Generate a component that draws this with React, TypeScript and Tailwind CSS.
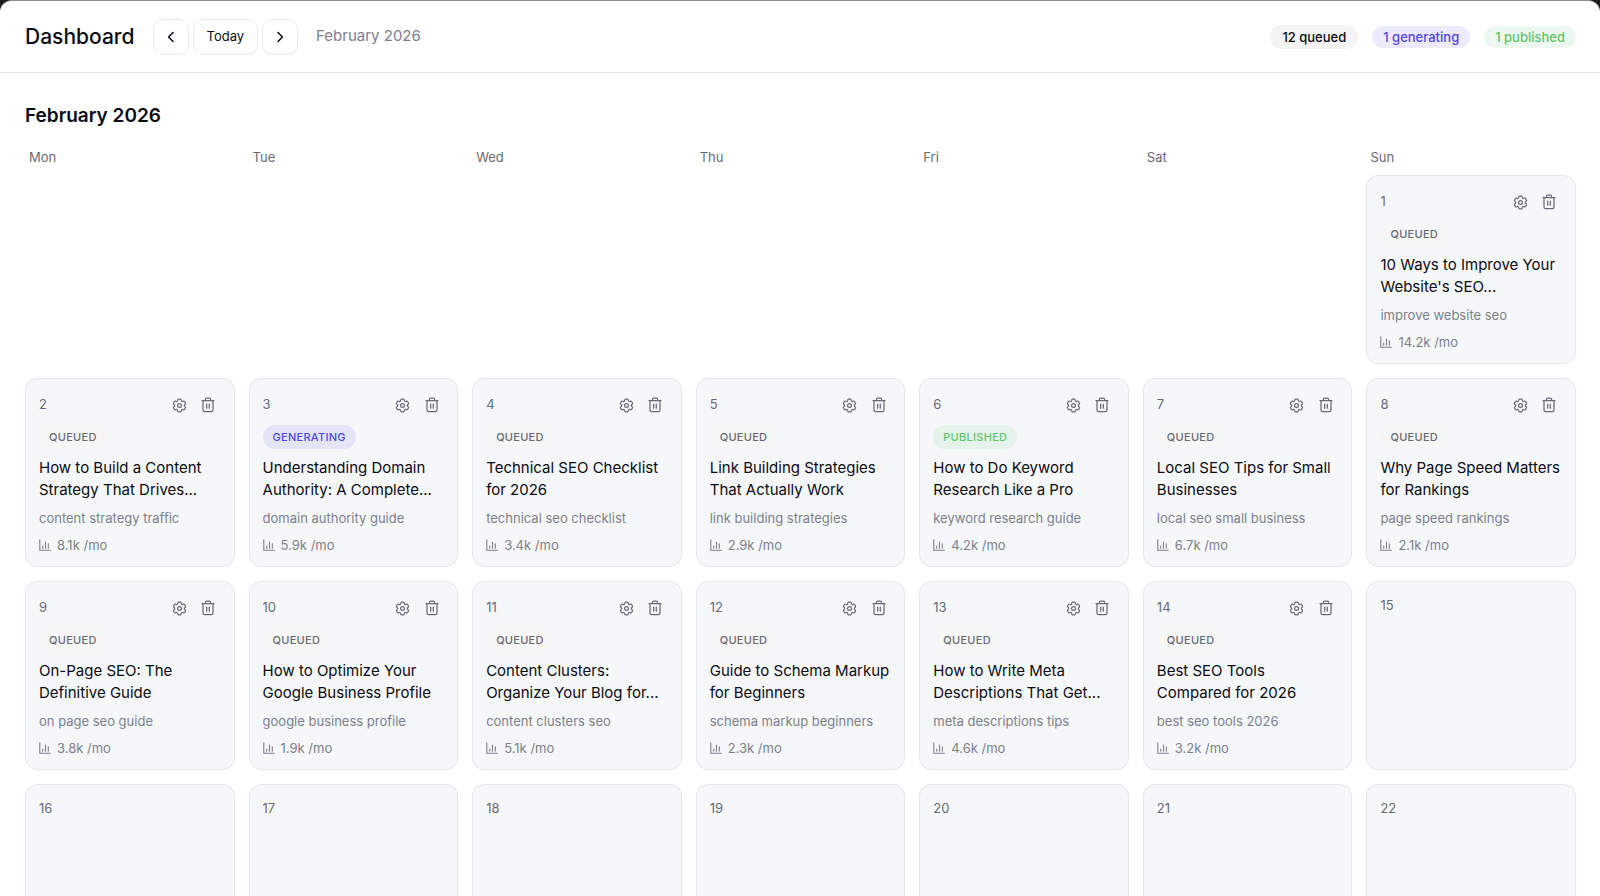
import { useState } from "react";

type Status = "queued" | "generating" | "published";

interface Article {
  day: number;
  status: Status;
  title: string;
  keyword: string;
  volume: string;
}

const WEEKDAYS = ["Mon", "Tue", "Wed", "Thu", "Fri", "Sat", "Sun"];

const ARTICLES: Article[] = [
  { day: 1, status: "queued", title: "10 Ways to Improve Your Website's SEO...", keyword: "improve website seo", volume: "14.2k" },
  { day: 2, status: "queued", title: "How to Build a Content Strategy That Drives...", keyword: "content strategy traffic", volume: "8.1k" },
  { day: 3, status: "generating", title: "Understanding Domain Authority: A Complete...", keyword: "domain authority guide", volume: "5.9k" },
  { day: 4, status: "queued", title: "Technical SEO Checklist for 2026", keyword: "technical seo checklist", volume: "3.4k" },
  { day: 5, status: "queued", title: "Link Building Strategies That Actually Work", keyword: "link building strategies", volume: "2.9k" },
  { day: 6, status: "published", title: "How to Do Keyword Research Like a Pro", keyword: "keyword research guide", volume: "4.2k" },
  { day: 7, status: "queued", title: "Local SEO Tips for Small Businesses", keyword: "local seo small business", volume: "6.7k" },
  { day: 8, status: "queued", title: "Why Page Speed Matters for Rankings", keyword: "page speed rankings", volume: "2.1k" },
  { day: 9, status: "queued", title: "On-Page SEO: The Definitive Guide", keyword: "on page seo guide", volume: "3.8k" },
  { day: 10, status: "queued", title: "How to Optimize Your Google Business Profile", keyword: "google business profile", volume: "1.9k" },
  { day: 11, status: "queued", title: "Content Clusters: Organize Your Blog for...", keyword: "content clusters seo", volume: "5.1k" },
  { day: 12, status: "queued", title: "Guide to Schema Markup for Beginners", keyword: "schema markup beginners", volume: "2.3k" },
  { day: 13, status: "queued", title: "How to Write Meta Descriptions That Get...", keyword: "meta descriptions tips", volume: "4.6k" },
  { day: 14, status: "queued", title: "Best SEO Tools Compared for 2026", keyword: "best seo tools 2026", volume: "3.2k" },
];

const DAYS = Array.from({ length: 22 }, (_, i) => i + 1);

const BADGE: Record<Status, string> = {
  queued: "bg-[#f6f6f7] text-[#686b76]",
  generating: "bg-[#e4e4f7] text-[#4f46e5]",
  published: "bg-[#e6f3ea] text-[#5fc46c]",
};

function GearIcon() {
  return (
    <svg className="size-[17px]" viewBox="0 0 24 24" fill="none" stroke="currentColor" strokeWidth="1.7" strokeLinecap="round" strokeLinejoin="round" aria-hidden="true">
      <path d="M9.594 3.94c.09-.542.56-.94 1.11-.94h2.593c.55 0 1.02.398 1.11.94l.213 1.281c.063.374.313.686.645.87.074.04.147.083.22.127.325.196.72.257 1.075.124l1.217-.456a1.125 1.125 0 0 1 1.37.49l1.296 2.247a1.125 1.125 0 0 1-.26 1.431l-1.003.827c-.293.241-.438.613-.43.992a7.723 7.723 0 0 1 0 .255c-.008.378.137.75.43.991l1.004.827c.424.35.534.955.26 1.43l-1.298 2.247a1.125 1.125 0 0 1-1.369.491l-1.217-.456c-.355-.133-.75-.072-1.076.124a6.47 6.47 0 0 1-.22.128c-.331.183-.581.495-.644.869l-.213 1.281c-.09.543-.56.94-1.11.94h-2.594c-.55 0-1.019-.398-1.11-.94l-.213-1.281c-.062-.374-.312-.686-.644-.87a6.52 6.52 0 0 1-.22-.127c-.325-.196-.72-.257-1.076-.124l-1.217.456a1.125 1.125 0 0 1-1.369-.49l-1.297-2.247a1.125 1.125 0 0 1 .26-1.431l1.004-.827c.292-.24.437-.613.43-.991a6.932 6.932 0 0 1 0-.255c.007-.38-.138-.751-.43-.992l-1.004-.827a1.125 1.125 0 0 1-.26-1.43l1.297-2.247a1.125 1.125 0 0 1 1.37-.491l1.216.456c.356.133.751.072 1.076-.124.072-.044.146-.086.22-.128.332-.183.582-.495.644-.869l.214-1.28Z" />
      <circle cx="12" cy="12" r="2.7" />
    </svg>
  );
}

function TrashIcon() {
  return (
    <svg className="size-4" viewBox="0 0 16 16" fill="none" stroke="currentColor" strokeWidth="1.25" strokeLinecap="round" strokeLinejoin="round" aria-hidden="true">
      <path d="M2 3.5h12M5.4 3.5V2.4c0-.8.6-1.4 1.4-1.4h2.4c.8 0 1.4.6 1.4 1.4v1.1M3 3.5v9.4c0 .9.7 1.6 1.6 1.6h6.8c.9 0 1.6-.7 1.6-1.6V3.5M6.7 7v4.2M9.3 7v4.2" />
    </svg>
  );
}

function ChartIcon() {
  return (
    <svg className="size-3" viewBox="0 0 12 12" fill="none" stroke="currentColor" strokeWidth="1.1" strokeLinecap="round" aria-hidden="true">
      <path d="M.8.8v10.4h10.6M3.7 7v2.2M6.5 3v6.2M9.3 4.8v4.4" />
    </svg>
  );
}

function Chevron({ next = false }: { next?: boolean }) {
  return (
    <svg className="h-3 w-2" viewBox="0 0 8 12" fill="none" stroke="currentColor" strokeWidth="1.5" strokeLinecap="round" strokeLinejoin="round" aria-hidden="true">
      <path d={next ? "M2 1.5 6.4 6 2 10.5" : "M6 1.5 1.6 6 6 10.5"} />
    </svg>
  );
}

function ArticleCard({ article }: { article: Article }) {
  return (
    <article>
      <div className="flex h-6 items-center justify-between">
        <span>{article.day}</span>
        <div className="flex gap-1">
          <button type="button" aria-label="Article settings" className="grid h-6 w-[25px] place-items-center">
            <GearIcon />
          </button>
          <button type="button" aria-label="Delete article" className="grid h-6 w-[25px] place-items-center">
            <TrashIcon />
          </button>
        </div>
      </div>
      <span className={`mt-2 inline-flex h-6 items-center rounded-full px-2.5 text-[11px] font-medium tracking-wide uppercase ${BADGE[article.status]}`}>
        {article.status}
      </span>
      <h3 className="mt-2 line-clamp-2 text-[15px] leading-[22px] text-[#0b0b14]">{article.title}</h3>
      <p className="mt-[7px] truncate leading-5 text-[#7d808b]">{article.keyword}</p>
      <p className="mt-[7px] flex items-center gap-[6px] leading-5 text-[#7d808b]">
        <ChartIcon />
        {article.volume} /mo
      </p>
    </article>
  );
}

export default function App() {
  const [month] = useState("February 2026");
  const button = "flex h-9 items-center justify-center rounded-[10px] border border-[#ebebed] bg-white";

  return (
    <div className="h-screen overflow-hidden bg-[#1c1c1e] font-['Inter','Liberation_Sans',sans-serif] text-[#0b0b14]">
      <div className="h-full overflow-hidden rounded-t-xl border-t border-[#8e8e90] bg-white">
        <header className="flex h-[72px] items-center justify-between border-b border-[#e9e9eb] pr-6 pl-[25px]">
          <div className="flex items-center">
            <h1 className="text-[21px] font-medium">Dashboard</h1>
            <nav aria-label="Month" className="ml-[18px] flex gap-1">
              <button type="button" aria-label="Previous month" className={`${button} w-9`}>
                <Chevron />
              </button>
              <button type="button" className={`${button} px-[13px] text-[13px]`}>Today</button>
              <button type="button" aria-label="Next month" className={`${button} w-9`}>
                <Chevron next />
              </button>
            </nav>
            <span className="ml-[18px] text-[15px] text-[#7d808b]">{month}</span>
          </div>
          <div className="flex items-center gap-[14px] text-[13px] font-medium">
            <span className="rounded-full bg-[#f4f4f5] px-3 py-0.5 leading-5">12 queued</span>
            <span className="rounded-full bg-[#ecebfd] px-[11px] py-px leading-5 text-[#4f46e5]">1 generating</span>
            <span className="rounded-full bg-[#edf9f0] px-[11px] py-px leading-5 text-[#5fc46c]">1 published</span>
          </div>
        </header>

        <main className="pt-[29px] pr-6 pl-[25px]">
          <h2 className="text-[19px] leading-7 font-semibold">{month}</h2>
          <div className="mt-[17px] grid grid-cols-7 gap-x-[14px] text-[13px] leading-5 text-[#686b76]">
            {WEEKDAYS.map((day) => (
              <div key={day} className="px-1">{day}</div>
            ))}
          </div>
          <div className="mt-2 grid auto-rows-[minmax(189px,auto)] grid-cols-7 gap-[14px]">
            {DAYS.map((day) => {
              const article = ARTICLES.find((a) => a.day === day);
              return (
                <div
                  key={day}
                  className={`rounded-xl border border-[#e6e7ea] bg-[#f5f7f9] px-[13px] text-[13px] text-[#686b76] ${day === 1 ? "col-start-7" : ""} ${article ? "pt-[14px] pb-2" : "pt-[13px] leading-5"}`}
                >
                  {article ? <ArticleCard article={article} /> : day}
                </div>
              );
            })}
          </div>
        </main>
      </div>
    </div>
  );
}
